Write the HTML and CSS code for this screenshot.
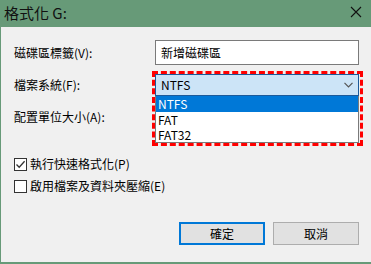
FILE: index.html
```html
<!DOCTYPE html>
<html lang="zh-Hant">
<head>
    <meta charset="UTF-8">
    <meta name="viewport" content="width=device-width, initial-scale=1.0">
    <title>格式化 G:</title>
    <link rel="stylesheet" href="styles.css">
</head>
<body>
    <div class="window">
        <div class="titlebar">
            <span class="title">格式化 G:</span>
            <span class="close">
                <svg width="12" height="12" viewBox="0 0 12 12">
                    <path d="M1 1L11 11M11 1L1 11" stroke="#111" stroke-width="1.1" fill="none"/>
                </svg>
            </span>
        </div>
        <div class="content">
            <div class="form">
                <label class="label">磁碟區標籤(V):</label>
                <div class="textbox">新增磁碟區</div>

                <label class="label">檔案系統(F):</label>
                <div class="combo-wrap">
                    <div class="combo">
                        <span>NTFS</span>
                        <svg class="chevron" width="9" height="6" viewBox="0 0 9 6">
                            <path d="M0.5 0.8L4.5 4.8L8.5 0.8" stroke="#555" stroke-width="1.2" fill="none"/>
                        </svg>
                    </div>
                    <ul class="list">
                        <li class="selected">NTFS</li>
                        <li>FAT</li>
                        <li>FAT32</li>
                    </ul>
                    <div class="highlight"></div>
                </div>

                <label class="label">配置單位大小(A):</label>
                <div class="combo-empty"></div>
            </div>

            <div class="options">
                <div class="check-row">
                    <span class="box">
                        <svg width="11" height="11" viewBox="0 0 11 11">
                            <path d="M1.5 5.5L4.2 8.3L9.6 2.2" stroke="#333" stroke-width="1.3" fill="none"/>
                        </svg>
                    </span>
                    <span>執行快速格式化(P)</span>
                </div>
                <div class="check-row">
                    <span class="box"></span>
                    <span>啟用檔案及資料夾壓縮(E)</span>
                </div>
            </div>

            <div class="buttons">
                <button class="btn default">確定</button>
                <button class="btn">取消</button>
            </div>
        </div>
    </div>
</body>
</html>
```

FILE: styles.css
```css
body {
    margin: 0;
    font-family: "Noto Sans CJK TC", "Noto Sans", sans-serif;
    font-size: 12px;
    color: #000;
    background: #f0f0f0;
}

.window {
    width: 371px;
    height: 264px;
    box-sizing: border-box;
    background: #f0f0f0;
    border-left: 1px solid #679a78;
    border-bottom: 2px solid #679a78;
}

.titlebar {
    height: 26px;
    margin-left: -1px;
    background: #679a78;
    display: flex;
    align-items: center;
    justify-content: space-between;
    padding: 0 9px 1px 4px;
}

.title {
    font-size: 15px;
    line-height: 18px;
    color: #111;
}

.close {
    display: flex;
    margin-top: -2px;
}

.content {
    padding: 13px 12px 0 13px;
}

.form {
    display: grid;
    grid-template-columns: 141px 204px;
    grid-template-rows: 25px 22px 22px;
    row-gap: 9px;
    align-items: center;
}

.form .label:last-of-type {
    margin-top: 1px;
}

.label {
    line-height: 14px;
}

.textbox {
    height: 25px;
    box-sizing: border-box;
    border: 1px solid #7a7a7a;
    background: #fff;
    padding: 0 5px;
    line-height: 23px;
}

.combo-wrap {
    position: relative;
    height: 22px;
    z-index: 2;
}

.combo {
    height: 22px;
    box-sizing: border-box;
    border: 1px solid #1c5a9a;
    background: #cce4f7;
    display: flex;
    align-items: center;
    justify-content: space-between;
    padding: 0 5px 0 5px;
    line-height: 20px;
}

.list {
    position: absolute;
    left: 0;
    right: 0;
    top: 22px;
    margin: 0;
    padding: 0;
    list-style: none;
    background: #fff;
    border: 1px solid #7a7a7a;
    border-top: none;
}

.list li {
    height: 15px;
    line-height: 15px;
    padding: 0 2px;
    overflow: hidden;
}

.list li.selected {
    height: 16px;
    line-height: 16px;
    background: #0078d7;
    color: #fff;
}

.highlight {
    position: absolute;
    left: -3px;
    right: -4px;
    top: -3px;
    height: 75px;
    border: 3px dashed #ff0000;
    box-sizing: border-box;
    pointer-events: none;
}

.combo-empty {
    height: 22px;
}

.options {
    margin-top: 30px;
    display: flex;
    flex-direction: column;
    gap: 8px;
}

.check-row {
    display: flex;
    align-items: center;
    gap: 3px;
    line-height: 14px;
}

.box {
    width: 13px;
    height: 13px;
    box-sizing: border-box;
    border: 1px solid #333;
    background: #fff;
    display: flex;
    align-items: center;
    justify-content: center;
}

.buttons {
    display: flex;
    justify-content: flex-end;
    gap: 8px;
    margin-top: 29px;
}

.btn {
    width: 86px;
    height: 23px;
    box-sizing: border-box;
    font-family: inherit;
    font-size: 12px;
    background: #e1e1e1;
    border: 1px solid #adadad;
    padding: 0;
    line-height: 20px;
    color: #000;
}

.btn.default {
    border: 2px solid #0078d7;
}
```
